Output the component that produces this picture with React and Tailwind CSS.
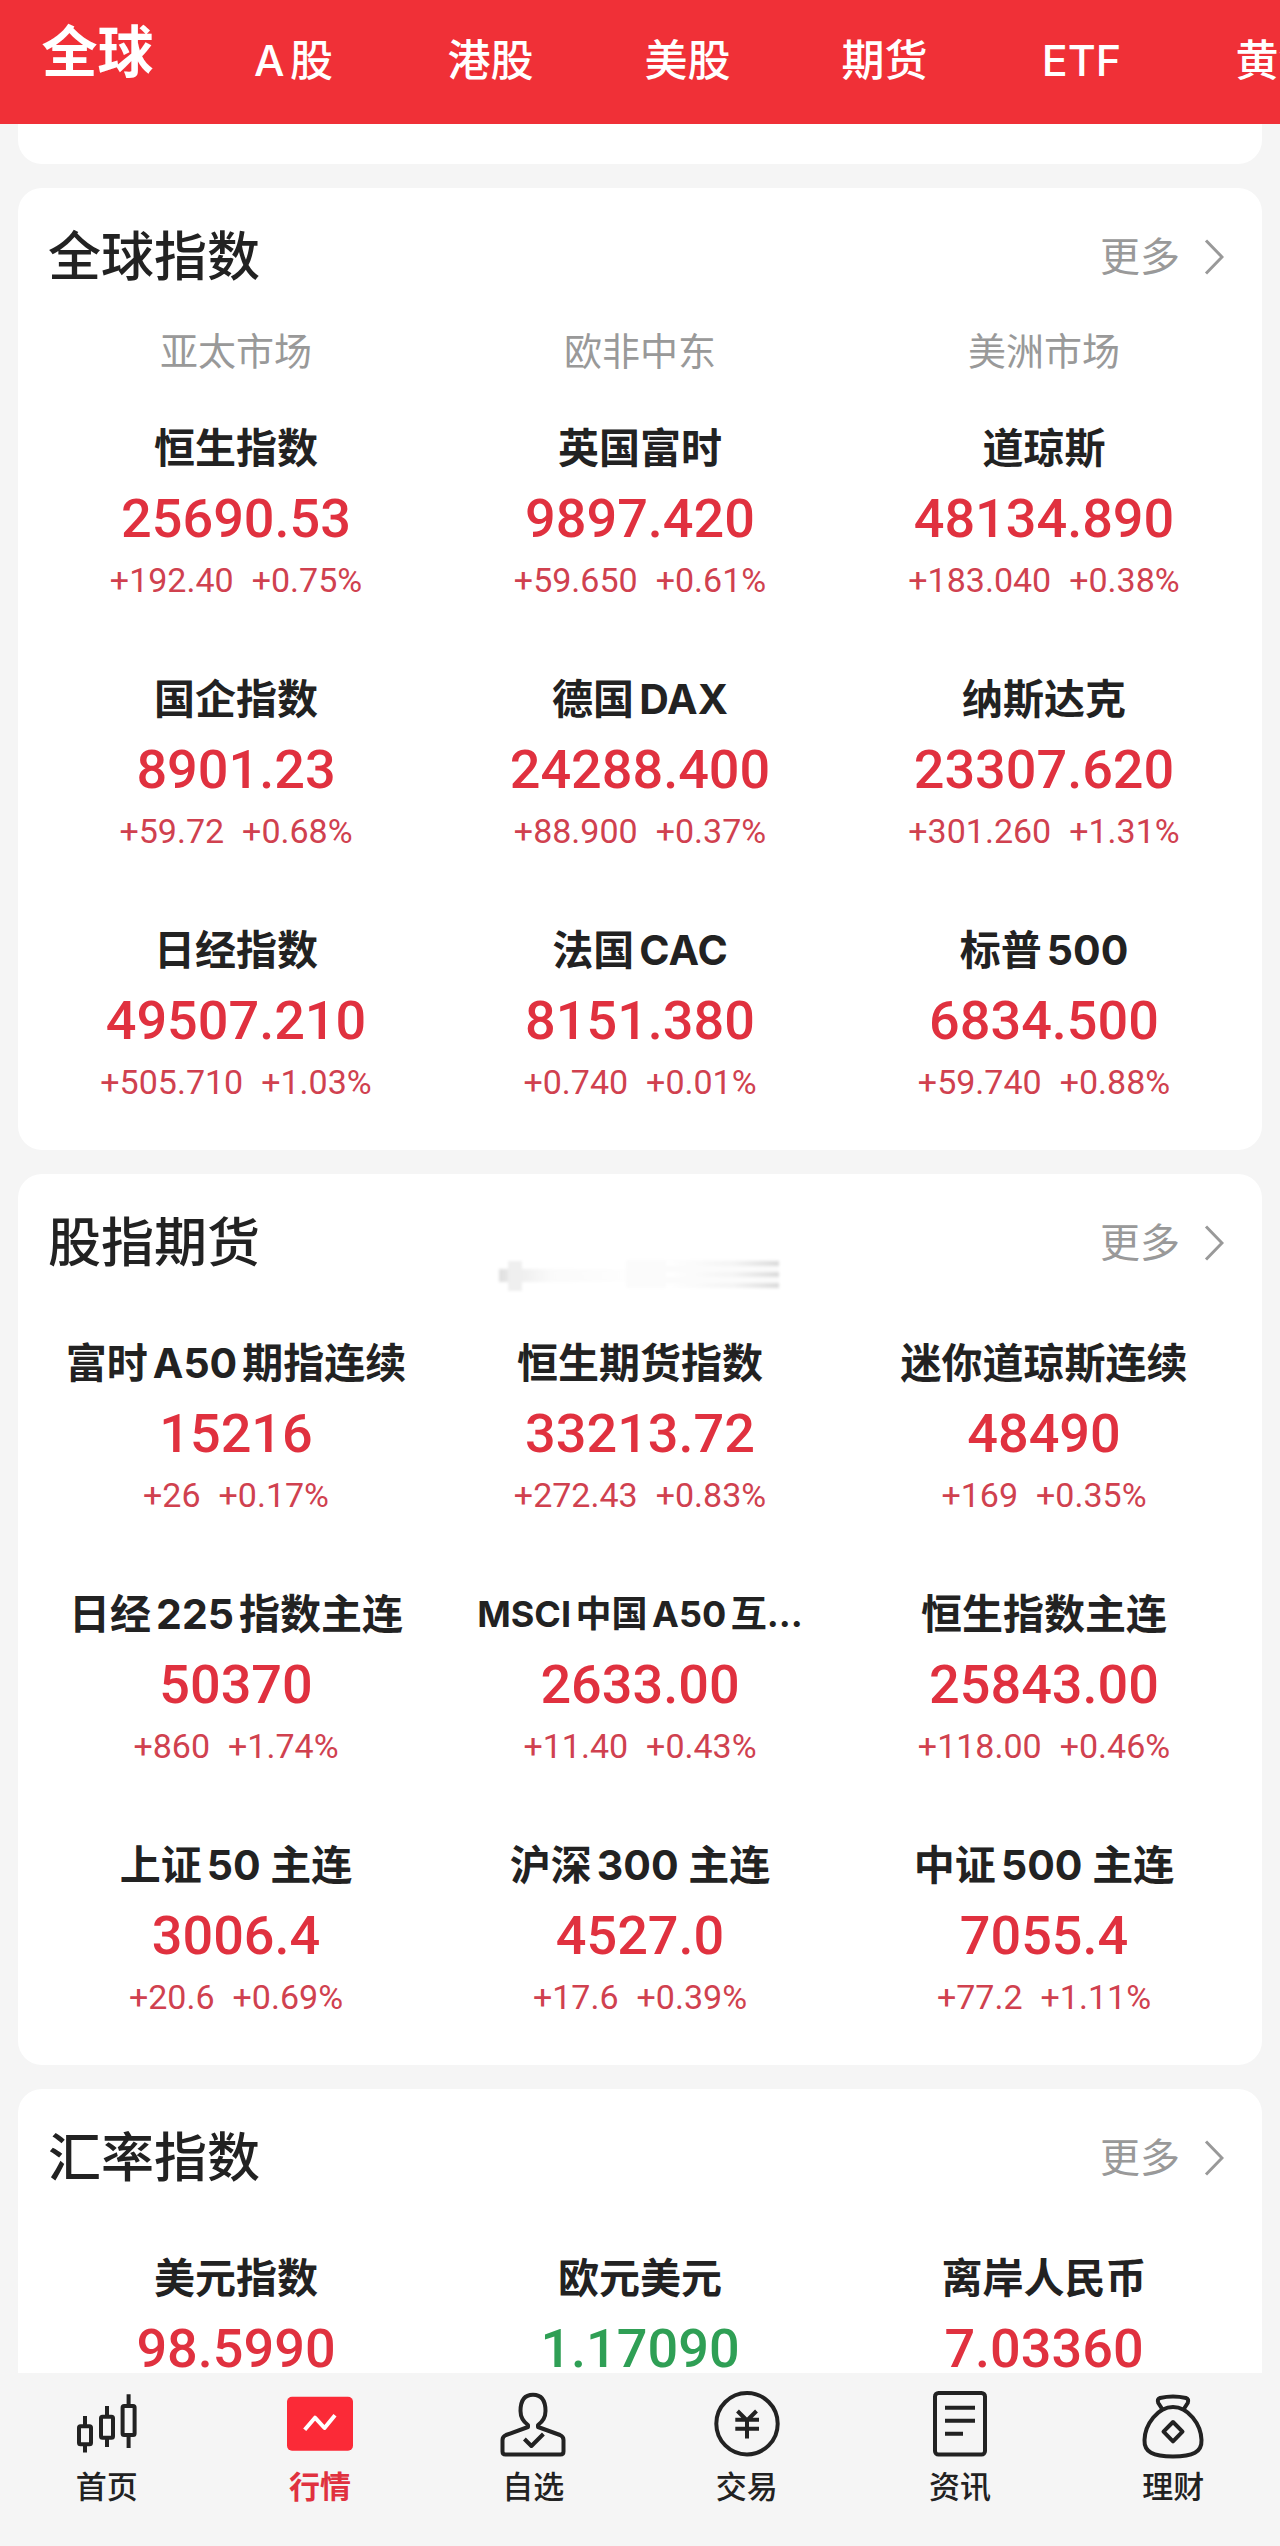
const TABS = ['全球', 'A股', '港股', '美股', '期货', 'ETF', '黄金'];

const GLOBAL = [
  ['恒生指数', '25690.53', '+192.40', '+0.75%'],
  ['英国富时', '9897.420', '+59.650', '+0.61%'],
  ['道琼斯', '48134.890', '+183.040', '+0.38%'],
  ['国企指数', '8901.23', '+59.72', '+0.68%'],
  ['德国DAX', '24288.400', '+88.900', '+0.37%'],
  ['纳斯达克', '23307.620', '+301.260', '+1.31%'],
  ['日经指数', '49507.210', '+505.710', '+1.03%'],
  ['法国CAC', '8151.380', '+0.740', '+0.01%'],
  ['标普500', '6834.500', '+59.740', '+0.88%'],
];

const FUTURES = [
  ['富时A50期指连续', '15216', '+26', '+0.17%'],
  ['恒生期货指数', '33213.72', '+272.43', '+0.83%'],
  ['迷你道琼斯连续', '48490', '+169', '+0.35%'],
  ['日经225指数主连', '50370', '+860', '+1.74%'],
  ['MSCI中国A50互...', '2633.00', '+11.40', '+0.43%'],
  ['恒生指数主连', '25843.00', '+118.00', '+0.46%'],
  ['上证50 主连', '3006.4', '+20.6', '+0.69%'],
  ['沪深300 主连', '4527.0', '+17.6', '+0.39%'],
  ['中证500 主连', '7055.4', '+77.2', '+1.11%'],
];

const RATES = [
  ['美元指数', '98.5990'],
  ['欧元美元', '1.17090', null, null, true],
  ['离岸人民币', '7.03360'],
];

function Quote({ item }) {
  const [name, price, change, percent, down] = item;
  const long = name.length > 10;
  return (
    <li className="flex flex-col items-center whitespace-nowrap">
      <h3 className={`font-bold leading-[60px] text-[#222] ${long ? 'text-[36px]' : 'text-[41px]'}`}>{name}</h3>
      <p className={`font-[Roboto] text-[54px] font-medium leading-[82px] ${down ? 'text-[#2f9f55]' : 'text-[#e0313f]'}`}>{price}</p>
      {change && (
        <p className="flex gap-[18px] font-[Roboto] text-[34px] leading-10 text-[#d0414f]">
          <span>{change}</span>
          <span>{percent}</span>
        </p>
      )}
    </li>
  );
}

function Section({ title, items, markets, children }) {
  return (
    <section className="relative shrink-0 rounded-3xl bg-white px-4 pt-[39px] pb-12">
      <div className="flex items-center justify-between pr-[22px] pl-[14px]">
        <h2 className="text-[53px] font-medium leading-[60px] text-[#222]">{title}</h2>
        <a href="#" className="flex items-center gap-6 text-[40px] leading-[60px] text-[#999]">
          更多
          <svg className="h-9 w-5" viewBox="0 0 20 36" fill="none" stroke="currentColor" strokeWidth="3">
            <path d="M2 1.500L18 18L2 34.500" />
          </svg>
        </a>
      </div>
      {markets && (
        <div className="mt-10 grid grid-cols-3 text-center text-[38px] leading-[48px] text-[#999]">
          {markets.map((m) => (
            <span key={m}>{m}</span>
          ))}
        </div>
      )}
      <ul className={`grid grid-cols-3 gap-y-[69px] ${markets ? 'mt-[43px]' : 'mt-15'}`}>
        {items.map((item) => (
          <Quote key={item[0]} item={item} />
        ))}
      </ul>
      {children}
    </section>
  );
}

function Smudge() {
  return (
    <svg className="absolute top-[80px] left-[478px] h-10 w-[286px]" viewBox="0 0 286 40" aria-hidden="true">
      <defs>
        <linearGradient id="fadeLeft">
          <stop offset="0" stopColor="#dedede" />
          <stop offset="0.1" stopColor="#ececec" />
          <stop offset="0.35" stopColor="#fafafa" />
          <stop offset="1" stopColor="#fff" />
        </linearGradient>
        <linearGradient id="fadeRight">
          <stop offset="0" stopColor="#fff" />
          <stop offset="0.6" stopColor="#f4f4f4" />
          <stop offset="1" stopColor="#dadada" />
        </linearGradient>
        <filter id="soft">
          <feGaussianBlur stdDeviation="1.5" />
        </filter>
      </defs>
      <g filter="url(#soft)">
        <rect x="3" y="15" width="150" height="13" fill="url(#fadeLeft)" />
        <rect x="12" y="7" width="14" height="30" fill="#efefef" />
        <rect x="130" y="6" width="153" height="28" fill="#fbfbfb" />
        <rect x="170" y="7" width="113" height="5" fill="url(#fadeRight)" />
        <rect x="170" y="18" width="113" height="5" fill="url(#fadeRight)" />
        <rect x="170" y="29" width="113" height="5" fill="url(#fadeRight)" />
      </g>
    </svg>
  );
}

const NAV = [
  {
    label: '首页',
    icon: (
      <>
        <rect x="5" y="35.300" width="12" height="18" rx="1.500" />
        <path d="M11 25v10M11 53.500v8" />
        <rect x="27" y="25.700" width="12" height="21" rx="1.500" />
        <path d="M33 15v10.500M33 47v9" />
        <rect x="48.600" y="15" width="12" height="29" rx="1.500" />
        <path d="M54.600 3.300V15M54.600 44v13" />
      </>
    ),
  },
  {
    label: '行情',
    active: true,
    icon: (
      <>
        <rect x="0" y="5.700" width="66" height="54" rx="5" fill="#fb2a37" stroke="none" />
        <path d="M17.700 38.700L28 26.700L37.500 37L48 24.300" stroke="#fff" />
      </>
    ),
  },
  {
    label: '自选',
    icon: (
      <>
        <path d="M28 34C22.500 30 20.500 26 20.500 20C20.500 9 25 3.700 33 3.700C41 3.700 45.500 9 45.500 20C45.500 26 43.500 30 38 34V36L60 44Q63.500 45.500 63.500 49V60.500Q63.500 63.500 60.500 63.500H5.500Q2.500 63.500 2.500 60.500V49Q2.500 45.500 6 44L28 36Z" />
        <path d="M24.400 48L31.400 55L43.400 43" />
      </>
    ),
  },
  {
    label: '交易',
    icon: (
      <>
        <circle cx="33" cy="32.700" r="30.700" />
        <path d="M23.500 20L33 29.500L42.500 20M33 29.500V47.500M21.300 28.800H45M21.300 37.800H45" />
      </>
    ),
  },
  {
    label: '资讯',
    icon: (
      <>
        <rect x="8" y="2" width="50" height="61.500" rx="3.500" />
        <path d="M18 16.700H48M18 29.700H48M18 42.700H36" />
      </>
    ),
  },
  {
    label: '理财',
    icon: (
      <>
        <path d="M33 16C48 16 61 33 61.500 49C62 61 53 65.500 33 65.500C13 65.500 4 61 4.500 49C5 33 18 16 33 16Z" />
        <path d="M22.500 18.500L18.300 12Q16.800 8 20 7Q33 4 46 7Q49.200 8 47.700 12L43.500 18.500" />
        <path d="M33 31L42.500 40.700L33 50.300L23.500 40.700Z" />
      </>
    ),
  },
];

export default function App() {
  return (
    <div className="flex h-screen flex-col overflow-hidden bg-[#f5f5f5] font-[Inter,'Noto_Sans_CJK_SC',sans-serif] [text-autospace:normal]">
      <header className="shrink-0 overflow-hidden bg-[#f03037]">
        <div className="flex h-[124px] w-max items-start text-white">
          {TABS.map((tab, i) => (
            <button
              key={tab}
              type="button"
              className={`shrink-0 leading-[60px] ${i === 0 ? 'w-[195px] pt-[22px] text-[56px] font-bold' : 'w-[197px] pt-[30px] text-[43px] font-medium'}`}
            >
              {tab}
            </button>
          ))}
        </div>
      </header>

      <main className="flex min-h-0 flex-1 flex-col gap-6 overflow-hidden px-[18px]">
        <div className="h-10 shrink-0 rounded-b-3xl bg-white" />
        <Section title="全球指数" items={GLOBAL} markets={['亚太市场', '欧非中东', '美洲市场']} />
        <Section title="股指期货" items={FUTURES}>
          <Smudge />
        </Section>
        <Section title="汇率指数" items={RATES} />
      </main>

      <nav className="grid h-[173px] shrink-0 grid-cols-6 bg-[#f5f5f5] pt-[18px]">
        {NAV.map(({ label, icon, active }) => (
          <a
            key={label}
            href="#"
            className={`flex flex-col items-center gap-[10px] text-[31px] leading-10 ${active ? 'font-bold text-[#e0313f]' : 'font-medium text-[#222]'}`}
          >
            <svg className="size-[66px] overflow-visible" viewBox="0 0 66 66" fill="none" stroke="currentColor" strokeWidth="4" strokeLinejoin="round">
              {icon}
            </svg>
            {label}
          </a>
        ))}
      </nav>
    </div>
  );
}
